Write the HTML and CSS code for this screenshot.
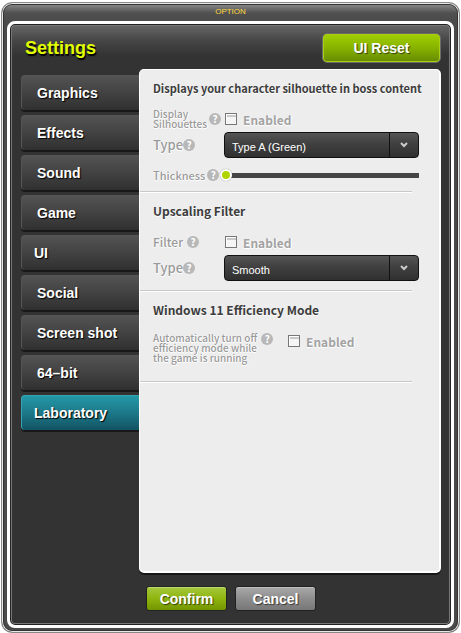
FILE: index.html
```
<!DOCTYPE html>
<html lang="en">
<head>
    <meta charset="UTF-8">
    <title>Option</title>
    <link rel="stylesheet" href="styles.css">
</head>
<body>

<div class="window">
    <div class="titlebar">OPTION</div>

    <form class="inner" onsubmit="return false">
        <div class="header">
            <h1>Settings</h1>
            <button type="button" class="btn reset">UI Reset</button>
        </div>

        <div class="main">
            <div class="tabs">
                <button type="button" class="tab">Graphics</button>
                <button type="button" class="tab">Effects</button>
                <button type="button" class="tab">Sound</button>
                <button type="button" class="tab">Game</button>
                <button type="button" class="tab wide">UI</button>
                <button type="button" class="tab">Social</button>
                <button type="button" class="tab">Screen shot</button>
                <button type="button" class="tab">64&#8211;bit</button>
                <button type="button" class="tab wide active">Laboratory</button>
            </div>

            <div class="content">
                <section>
                    <h2 class="compact">Displays your character silhouette in boss content</h2>
                    <div class="row">
                        <div class="name apart"><span class="small">Display<br>Silhouettes</span><button type="button" class="help">?</button></div>
                        <label class="check"><input type="checkbox"> Enabled</label>
                    </div>
                    <div class="row">
                        <div class="name"><label for="outline">Type</label><button type="button" class="help">?</button></div>
                        <div class="select">
                            <select id="outline">
                                <option>Type A (Green)</option>
                            </select>
                            <svg class="arrow" viewBox="0 0 8 6"><path d="M1 1l3 3 3-3" /></svg>
                        </div>
                    </div>
                    <div class="row slider">
                        <div class="name apart"><label for="thickness">Thickness</label><button type="button" class="help">?</button></div>
                        <input type="range" id="thickness" min="0" max="10" value="0">
                    </div>
                </section>
                <hr>

                <section>
                    <h2>Upscaling Filter</h2>
                    <div class="row">
                        <div class="name gap"><span>Filter</span><button type="button" class="help">?</button></div>
                        <label class="check"><input type="checkbox"> Enabled</label>
                    </div>
                    <div class="row">
                        <div class="name"><label for="filter">Type</label><button type="button" class="help">?</button></div>
                        <div class="select">
                            <select id="filter">
                                <option>Smooth</option>
                            </select>
                            <svg class="arrow" viewBox="0 0 8 6"><path d="M1 1l3 3 3-3" /></svg>
                        </div>
                    </div>
                </section>
                <hr>

                <section>
                    <h2>Windows 11 Efficiency Mode</h2>
                    <div class="row long">
                        <div class="name gap"><span class="small">Automatically turn off<br>efficiency mode while<br>the game is running</span><button type="button" class="help">?</button></div>
                        <label class="check"><input type="checkbox"> Enabled</label>
                    </div>
                </section>
                <hr>
            </div>
        </div>

        <div class="footer">
            <button type="submit" class="btn confirm">Confirm</button>
            <button type="button" class="btn cancel">Cancel</button>
        </div>
    </form>
</div>

</body>
</html>
```
FILE: styles.css
```
* {
    box-sizing: border-box;
}

body {
    margin: 0;
    padding: 2px 1px 0;
    background: #fff;
    font-family: "Liberation Sans", Arial, sans-serif;
}

button, select, input {
    font-family: inherit;
    margin: 0;
}

.window {
    display: flex;
    flex-direction: column;
    min-height: calc(100vh - 2px);
    padding: 0 5px 4px;
    border: 1px solid #888;
    border-radius: 11px;
    background: linear-gradient(#929292, #505050 10px, #4a4a4a 20px, #4a4a4a);
    box-shadow: inset 0 0 0 1px #e8e8e8, inset 0 0 0 2px #333;
}

.titlebar {
    height: 18px;
    line-height: 18px;
    text-align: center;
    font-size: 8px;
    color: #ffd83a;
}

.inner {
    flex: 1;
    display: flex;
    flex-direction: column;
    padding: 8px 10px 14px 11px;
    border: 3px solid #fff;
    border-radius: 8px;
    background: linear-gradient(#696969, #474747 16px, #333 32px);
    box-shadow: inset 0 0 0 1px #222, inset 0 0 0 2px #777;
}

.header {
    display: flex;
    justify-content: space-between;
    align-items: center;
    margin-bottom: 5px;
}

h1 {
    margin: 0 0 0 4px;
    font-size: 18px;
    line-height: 32px;
    color: #e1ff00;
    text-shadow: 1px 2px 1px #000;
}

.btn {
    height: 25px;
    padding: 0;
    border: 1px solid #222;
    border-radius: 3px;
    font-size: 14px;
    font-weight: bold;
    color: #fff;
    text-shadow: 1px 1px 1px rgba(0, 0, 0, 0.6);
}

.reset {
    width: 119px;
    height: 30px;
    border-color: #6b6b6b;
    border-radius: 5px;
    background: linear-gradient(#a2d000, #87b200 50%, #668a00);
    box-shadow: inset 0 0 0 1px #a9cf12;
}

.main {
    flex: 1;
    display: flex;
}

.tabs {
    width: 118px;
    padding-top: 6px;
    flex-shrink: 0;
}

.tab {
    display: block;
    width: 100%;
    height: 35px;
    margin-bottom: 5px;
    padding: 0 0 0 15px;
    border: 1px solid #555;
    border-width: 1px 0 0 1px;
    border-radius: 4px 0 0 4px;
    background: linear-gradient(#535353, #424242 50%, #303030);
    box-shadow: 0 2px 0 #181818;
    font-size: 14px;
    font-weight: bold;
    text-align: left;
    color: #fff;
    text-shadow: 1px 1px 1px #000;
}

.tab.wide {
    padding-left: 12px;
}

.tab.active {
    border-color: #35a5b4;
    background: linear-gradient(#2498a8, #1c7888 50%, #125363);
}

.content {
    flex: 1;
    min-width: 0;
    border: solid #fff;
    border-width: 1px 2px 2px 1px;
    border-radius: 5px;
    background: #ededed;
    box-shadow: 0 2px 0 #181818;
    font-family: "Noto Sans CJK KR", sans-serif;
}

section {
    padding: 8px 20px 9px 13px;
}

h2 {
    margin: 0 0 10px;
    font-size: 12px;
    line-height: 20px;
    white-space: nowrap;
    color: #3c3c3c;
    text-shadow: 0 1px 0 #fff;
}

h2.compact {
    font-size: 11px;
}

.row {
    display: grid;
    grid-template-columns: 71px 1fr;
    align-items: center;
    min-height: 22px;
    margin-bottom: 2px;
    font-size: 13px;
    font-weight: 500;
    color: #9a9a9a;
    text-shadow: 0 1px 0 #fff, 1px 0 0 #fff;
}

.row:last-child {
    margin-bottom: 0;
}

.row.slider {
    grid-template-columns: 67px 1fr;
    min-height: 30px;
    margin-bottom: -8px;
    font-size: 11px;
}

.row.long {
    grid-template-columns: 134px 1fr;
    align-items: start;
    min-height: 42px;
}

.name {
    display: flex;
    align-items: center;
    line-height: 20px;
    white-space: nowrap;
}

.name.gap {
    gap: 4px;
    font-size: 12px;
}

.name.apart {
    gap: 2px;
}

.long .name {
    align-items: flex-start;
    padding-top: 3px;
}

.name .small {
    font-size: 10px;
    line-height: 10px;
}

.help {
    flex-shrink: 0;
    width: 12px;
    height: 12px;
    padding: 0;
    border: 0;
    border-radius: 50%;
    background: #b8b8b8;
    color: #fff;
    font-size: 10px;
    font-weight: bold;
    line-height: 12px;
}

.check {
    display: flex;
    align-items: center;
    gap: 6px;
    height: 22px;
    padding-left: 1px;
    font-weight: bold;
    font-size: 12px;
    color: #a3a3a3;
}

.check input {
    appearance: none;
    width: 12px;
    height: 12px;
    border: 1px solid #777;
    background: #f5f5f5;
    box-shadow: inset 1px 1px 0 #fff, inset 0 3px 0 #c9c9c9;
}

.check input:checked {
    background: #9bc400;
}

.select {
    position: relative;
}

.select select {
    display: block;
    appearance: none;
    width: 100%;
    height: 26px;
    padding: 3px 36px 0 7px;
    border: 1px solid #111;
    border-radius: 4px;
    background: linear-gradient(to right, #111, #111) right 28px top 0 / 1px 100% no-repeat,
        linear-gradient(#555, #424242 40%, #303030);
    font-family: "Liberation Sans", Arial, sans-serif;
    font-size: 11px;
    color: #fff;
}

.arrow {
    position: absolute;
    right: 11px;
    top: 10px;
    width: 8px;
    height: 6px;
    fill: none;
    stroke: #ccc;
    stroke-width: 2;
    pointer-events: none;
}

input[type=range] {
    appearance: none;
    width: 100%;
    height: 12px;
    background: linear-gradient(#444, #444) 6px 4px / 100% 5px no-repeat;
    border-radius: 3px;
}

input[type=range]::-webkit-slider-thumb {
    appearance: none;
    width: 12px;
    height: 12px;
    border: 2px solid #fff;
    border-radius: 50%;
    background: #b0d400;
    box-shadow: 0 0 1px #777;
}

hr {
    height: 2px;
    margin: 0 27px 0 0;
    border: 0;
    background: linear-gradient(#c8c8c8 50%, #fff 50%);
}

.footer {
    display: flex;
    justify-content: center;
    gap: 8px;
    padding-top: 13px;
}

.footer .btn {
    width: 81px;
}

.confirm {
    background: linear-gradient(#a5c83c, #8fb50f 50%, #739600);
    box-shadow: inset 0 1px 0 #c0d870;
}

.cancel {
    background: linear-gradient(#aaa, #8d8d8d 50%, #777);
    box-shadow: inset 0 1px 0 #c0c0c0;
}
```
